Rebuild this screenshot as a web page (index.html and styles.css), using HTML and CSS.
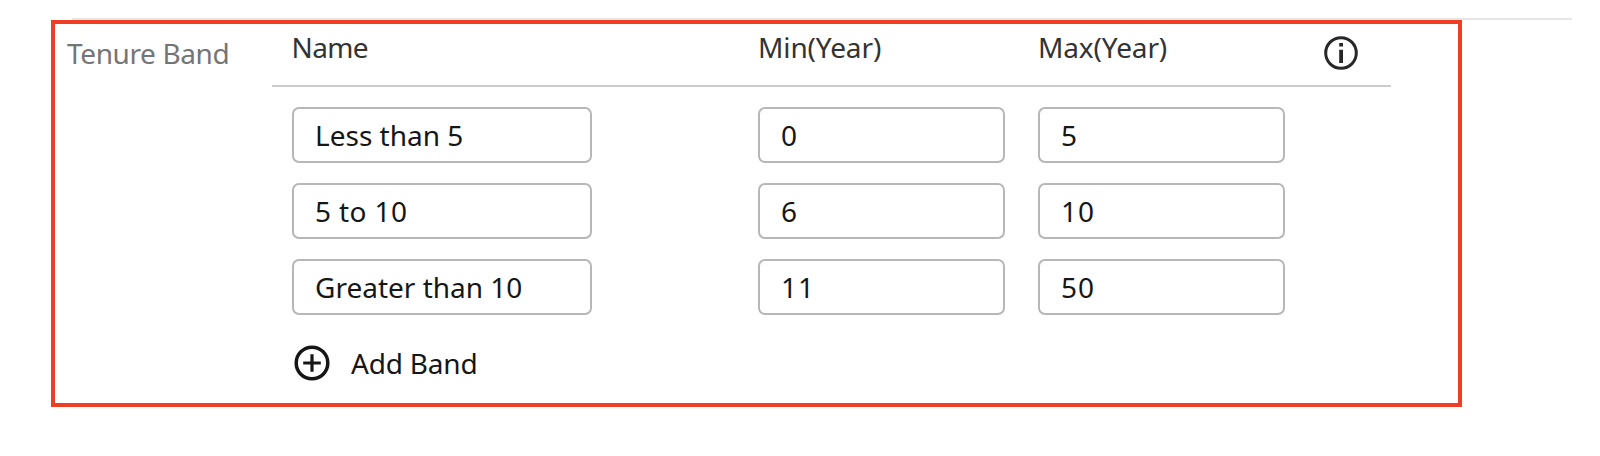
FILE: index.html
```html
<!DOCTYPE html>
<html lang="en">
<head>
<meta charset="utf-8">
<title>Tenure Band</title>
<link rel="stylesheet" href="styles.css">
</head>
<body>
<hr class="rule">
<section class="panel">
  <div class="label">Tenure Band</div>
  <div class="bands">
    <div class="grid head">
      <span class="head-name">Name</span>
      <span class="head-year">Min(Year)</span>
      <span class="head-year">Max(Year)</span>
      <svg class="info" width="34" height="34" viewBox="0 0 34 34">
        <circle cx="17" cy="17" r="15.3" fill="none" stroke="#272727" stroke-width="3"/>
        <path d="M15.2 7h3.8v3.4h-3.8zM15.2 13.7h3.8v13.3h-3.8z" fill="#272727"/>
      </svg>
    </div>
    <div class="grid row">
      <div class="field name">Less than 5</div>
      <div class="field">0</div>
      <div class="field">5</div>
    </div>
    <div class="grid row">
      <div class="field name loose">5 to 10</div>
      <div class="field">6</div>
      <div class="field wide">10</div>
    </div>
    <div class="grid row">
      <div class="field name">Greater than 10</div>
      <div class="field wide">11</div>
      <div class="field wide">50</div>
    </div>
    <div class="add">
      <svg width="36" height="36" viewBox="0 0 36 36">
        <circle cx="18" cy="18" r="15.8" fill="none" stroke="#161616" stroke-width="3.5"/>
        <path d="M9.2 18h17.6M18 9.2v17.6" fill="none" stroke="#161616" stroke-width="3.2"/>
      </svg>
      <span class="add-text">Add Band</span>
    </div>
  </div>
</section>
</body>
</html>
```
FILE: styles.css
```css
* { box-sizing: border-box; }
body {
  margin: 0;
  padding-top: 18px;
  background: #fff;
  color: #161616;
  font: 28px/38px "Noto Sans", "Open Sans", sans-serif;
  white-space: nowrap;
}
.rule { width: 1500px; height: 2px; margin: 0 0 0 72px; border: 0; background: #e6e6e6; }
.panel {
  display: flex;
  width: 1411px;
  height: 387px;
  margin-left: 51px;
  border: 4px solid #ee3e23;
}
.label { width: 217px; padding: 10px 0 0 12px; color: #757575; letter-spacing: -0.38px; }
.bands { width: 1119px; }
.grid {
  display: grid;
  grid-template-columns: 433px 247px 247px 34px;
  column-gap: 33px;
  padding-left: 20px;
}
.head { height: 63px; padding-top: 4px; border-bottom: 2px solid #ccc; color: #333; align-items: start; }
.head-name { margin-left: -0.5px; letter-spacing: -0.6px; }
.head-year { letter-spacing: -0.12px; }
.info { margin: 8px 0 0 6px; }
.row { margin-top: 20px; }
.field { height: 56px; padding-left: 21px; border: 2px solid #b7b7b7; border-radius: 7px; line-height: 52px; }
.name { width: 300px; }
.loose { letter-spacing: 0.4px; }
.wide { letter-spacing: 1px; }
.add { display: flex; align-items: center; height: 38px; margin-top: 29px; padding-left: 21.5px; gap: 21.5px; }
.add-text { letter-spacing: -0.2px; }
```
